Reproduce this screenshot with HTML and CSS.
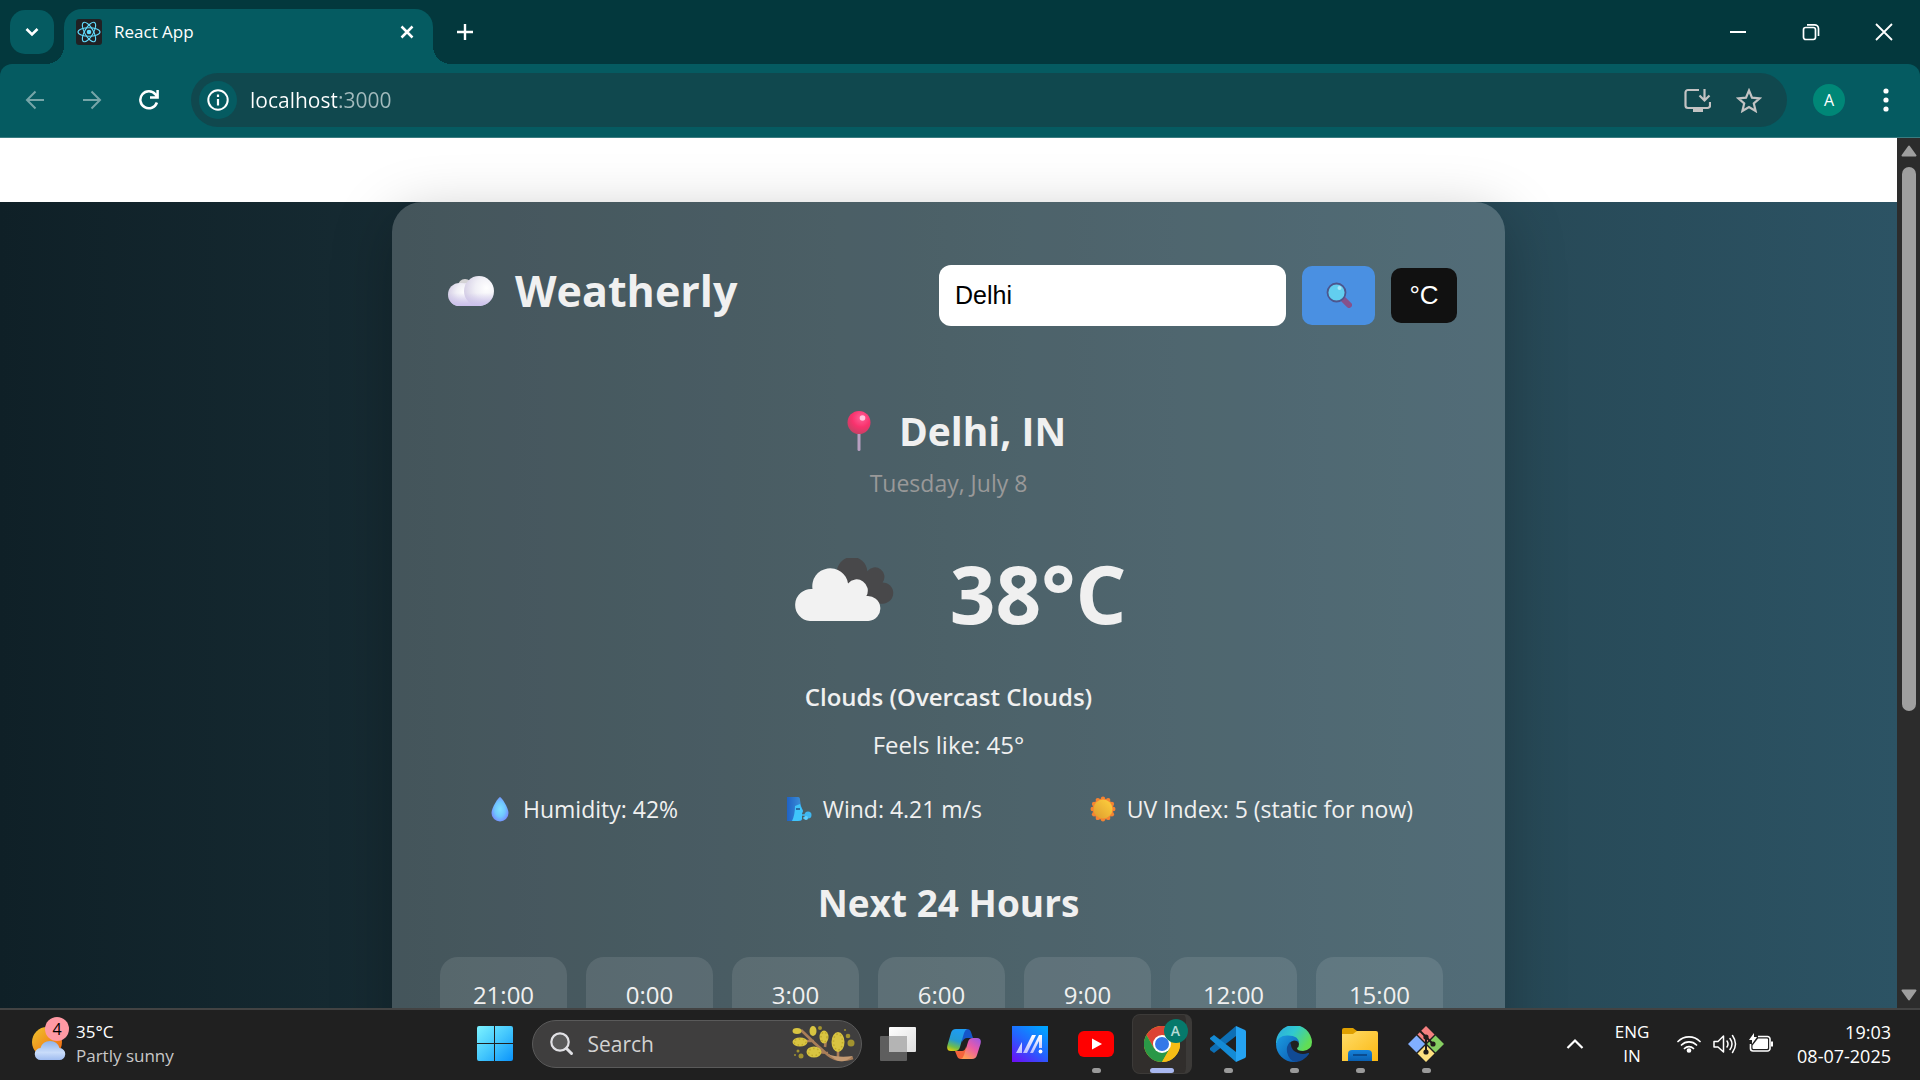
FILE: index.html
```html
<!DOCTYPE html>
<html lang="en">
<head>
<meta charset="utf-8">
<meta name="viewport" content="width=device-width, initial-scale=1">
<title>React App</title>
<link rel="stylesheet" href="styles.css">
</head>
<body>
<header class="browser">
  <div class="titlebar">
    <button class="tab-search" aria-label="Search tabs"><svg width="14" height="10" viewBox="0 0 14 10"><path d="M1.500 2 7 7.500 12.500 2" fill="none" stroke="#fff" stroke-width="2.600"/></svg></button>
    <div class="tab">
      <svg class="favicon" width="26" height="26" viewBox="0 0 26 26"><rect width="26" height="26" rx="3" fill="#202124"/><g fill="none" stroke="#61dafb" stroke-width="1.100"><ellipse cx="13" cy="13" rx="11" ry="4.300"/><ellipse cx="13" cy="13" rx="11" ry="4.300" transform="rotate(60 13 13)"/><ellipse cx="13" cy="13" rx="11" ry="4.300" transform="rotate(120 13 13)"/></g><circle cx="13" cy="13" r="2.300" fill="#61dafb"/></svg>
      <span class="tab-title">React App</span>
      <button class="tab-close" aria-label="Close tab"><svg width="14" height="14" viewBox="0 0 14 14"><path d="M1.500 1.500l11 11M12.500 1.500l-11 11" stroke="#fff" stroke-width="2.500"/></svg></button>
    </div>
    <button class="new-tab" aria-label="New tab"><svg width="18" height="18" viewBox="0 0 18 18"><path d="M9 1v16M1 9h16" stroke="#fff" stroke-width="2.400"/></svg></button>
    <div class="window-controls">
      <button aria-label="Minimize"><svg width="18" height="18" viewBox="0 0 18 18"><path d="M1 9h16" stroke="#fff" stroke-width="2"/></svg></button>
      <button aria-label="Restore"><svg width="18" height="18" viewBox="0 0 18 18" fill="none" stroke="#fff" stroke-width="1.700"><rect x="1.500" y="4.500" width="12" height="12" rx="2.200"/><path d="M5 1.800h7.500a4 4 0 0 1 4 4V13"/></svg></button>
      <button aria-label="Close"><svg width="18" height="18" viewBox="0 0 18 18"><path d="M1 1l16 16M17 1L1 17" stroke="#fff" stroke-width="1.800"/></svg></button>
    </div>
  </div>
  <div class="toolbar">
    <button class="nav dim" aria-label="Back"><svg width="20" height="20" viewBox="0 0 20 20" fill="none" stroke="#fff" stroke-width="2"><path d="M19 10H2M10.500 1.500 2 10l8.500 8.500"/></svg></button>
    <button class="nav dim" aria-label="Forward"><svg width="20" height="20" viewBox="0 0 20 20" fill="none" stroke="#fff" stroke-width="2"><path d="M1 10h17M9.500 1.500 18 10l-8.500 8.500"/></svg></button>
    <button class="nav" aria-label="Reload"><svg width="20" height="20" viewBox="0 0 20 20" fill="none" stroke="#fff" stroke-width="2.500"><path d="M17.900 12.500A8.500 8.500 0 1 1 16.500 4.500L18.500 7M18.600 0v7.500H11"/></svg></button>
    <div class="omnibox">
      <button class="site-info" aria-label="View site information"><svg width="22" height="22" viewBox="0 0 22 22"><circle cx="11" cy="11" r="9.700" fill="none" stroke="#fff" stroke-width="2"/><path d="M11 10v6.500M11 5.500v2.400" stroke="#fff" stroke-width="2.200"/></svg></button>
      <input class="url" type="text" value="localhost:3000" aria-label="Address">
      <button class="omni-action" aria-label="Install app"><svg width="27" height="24" viewBox="0 0 27 24" fill="none" stroke="#c3c3c3" stroke-width="2.200"><path d="M15 2H4a2.500 2.500 0 0 0-2.500 2.500v13A2.500 2.500 0 0 0 4 20h19.500a2.500 2.500 0 0 0 2.500-2.500V14M20.500 1v10.500M15.500 7.500l5 5 5-5"/><path d="M9 20h10v4H9z" fill="#c3c3c3" stroke="none"/></svg></button>
      <button class="omni-action" aria-label="Bookmark this tab"><svg width="26" height="25" viewBox="0 0 26 25"><path d="M13 2.500l3 7.200 7.700.7-5.900 5.100 1.800 7.500L13 19l-6.600 4 1.800-7.500-5.900-5.100 7.700-.7z" fill="none" stroke="#c3c3c3" stroke-width="2.200"/></svg></button>
    </div>
    <button class="profile" aria-label="Profile">A</button>
    <button class="menu" aria-label="Menu"><svg width="6" height="24" viewBox="0 0 6 24" fill="#fff"><circle cx="3" cy="3" r="2.600"/><circle cx="3" cy="12" r="2.600"/><circle cx="3" cy="21" r="2.600"/></svg></button>
  </div>
</header>

<div class="viewport">
  <main class="page">
    <div class="backdrop">
      <section class="card">
        <div class="card-header">
          <h1 class="brand">
            <svg width="48" height="34" viewBox="0 0 48 34"><defs><radialGradient id="c1" cx=".75" cy=".4" r=".75"><stop offset="0" stop-color="#fff"/><stop offset=".5" stop-color="#f0eff6"/><stop offset="1" stop-color="#d6d0e6"/></radialGradient><linearGradient id="c2" x1="0" y1="0" x2="0" y2="1"><stop offset="0" stop-color="#c9bfe9" stop-opacity="0"/><stop offset="1" stop-color="#cbc0ec"/></linearGradient></defs><circle cx="18" cy="12" r="7" fill="#d4d3d5"/><path d="M12 9h22v23H12z" fill="#e6e3ef"/><circle cx="12.500" cy="20.500" r="11.500" fill="url(#c1)"/><circle cx="32" cy="17" r="15" fill="url(#c1)"/><path d="M12 32A11.500 11.500 0 0 1 1 19h46a15 15 0 0 1-15 13z" fill="url(#c2)"/></svg>
            <span>Weatherly</span>
          </h1>
          <form class="search" onsubmit="return false">
            <input class="city" type="text" value="Delhi" aria-label="City">
            <button class="go" aria-label="Search"><svg width="26" height="26" viewBox="0 0 26 26"><path d="M17 17l6 6" stroke="#86518b" stroke-width="6" stroke-linecap="round"/><circle cx="10.500" cy="10.500" r="9" fill="#62ceef" stroke="#4d568e" stroke-width="1.800"/><circle cx="13.500" cy="6" r="2" fill="#a8e7fa"/></svg></button>
            <button class="unit" type="button">°C</button>
          </form>
        </div>
        <h2 class="place">
          <svg width="24" height="42" viewBox="0 0 24 42"><defs><radialGradient id="p1" cx=".6" cy=".3" r=".8"><stop offset="0" stop-color="#ff5f97"/><stop offset=".5" stop-color="#f8326d"/><stop offset="1" stop-color="#b94462"/></radialGradient></defs><rect x="10.500" y="22" width="3" height="19" rx="1.500" fill="#b79fc0"/><circle cx="12" cy="12.500" r="11.500" fill="url(#p1)"/><circle cx="15.500" cy="8" r="2.800" fill="#ffc4dd"/></svg>
          <span>Delhi, IN</span>
        </h2>
        <p class="date">Tuesday, July 8</p>
        <div class="now">
          <svg width="102" height="64" viewBox="0 0 100 63"><path d="M42 30V15a14.500 14.500 0 0 1 30-2 9 9 0 0 1 15 11 10.500 10.500 0 1 1 0 21H70z" fill="#48484a"/><path d="M15.500 62a15.500 15.500 0 0 1 2.500-31.500A17.700 17.700 0 0 1 53 25a11 11 0 0 1 18 12.500A12.300 12.300 0 1 1 73 62z" fill="#f2f2f2"/></svg>
          <span class="temp">38°C</span>
        </div>
        <p class="condition">Clouds (Overcast Clouds)</p>
        <p class="feels">Feels like: 45°</p>
        <ul class="stats">
          <li><svg width="24" height="26" viewBox="0 0 24 26"><defs><radialGradient id="d" cx=".5" cy=".5" r=".6"><stop offset="0" stop-color="#82e1ff"/><stop offset=".5" stop-color="#70c8ff"/><stop offset="1" stop-color="#777cff"/></radialGradient></defs><path d="M12 1c1.300 0 8.500 10.500 8.500 16a8.500 8.500 0 0 1-17 0C3.500 11.500 10.700 1 12 1z" fill="url(#d)"/></svg>Humidity: 42%</li>
          <li><svg width="26" height="26" viewBox="0 0 26 26"><defs><linearGradient id="w"><stop offset="0" stop-color="#1f62c4"/><stop offset="1" stop-color="#3f95dc"/></linearGradient></defs><path d="M1 1h11q2 0 2 3l1 6 2 5-1 3v6q-1 1-4 1H1z" fill="url(#w)"/><path d="M9 10l5-2 1 3 2 4-1 2v6q-1 2-4 2H6q3-6 3-15z" fill="#3fc5fb"/><path d="M10 13h4" stroke="#234f86" stroke-width="1.500"/><path d="M16 19h4M17 22h4" stroke="#43b9f1" stroke-width="1.500"/><circle cx="22" cy="19" r="3.500" fill="#3fb7f0"/><circle cx="20" cy="22" r="2" fill="#5fd0ff"/></svg>Wind: 4.21 m/s</li>
          <li><svg width="26" height="26" viewBox="0 0 26 26"><defs><linearGradient id="s" x1="1" y1="0" x2="0" y2="1"><stop offset="0" stop-color="#ffd23e"/><stop offset="1" stop-color="#dd9a2e"/></linearGradient></defs><g fill="#f58331"><circle cx="13" cy="13" r="10.500"/><circle cx="13" cy="2.700" r="2.200"/><circle cx="18.200" cy="4.100" r="2.200"/><circle cx="21.900" cy="7.900" r="2.200"/><circle cx="23.300" cy="13" r="2.200"/><circle cx="21.900" cy="18.200" r="2.200"/><circle cx="18.200" cy="21.900" r="2.200"/><circle cx="13" cy="23.300" r="2.200"/><circle cx="7.800" cy="21.900" r="2.200"/><circle cx="4.100" cy="18.200" r="2.200"/><circle cx="2.700" cy="13" r="2.200"/><circle cx="4.100" cy="7.900" r="2.200"/><circle cx="7.800" cy="4.100" r="2.200"/></g><circle cx="13" cy="13" r="9.500" fill="url(#s)"/></svg>UV Index: 5 (static for now)</li>
        </ul>
        <h3 class="section-title">Next 24 Hours</h3>
        <ol class="hours">
          <li>21:00</li><li>0:00</li><li>3:00</li><li>6:00</li><li>9:00</li><li>12:00</li><li>15:00</li>
        </ol>
      </section>
    </div>
  </main>
  <div class="scrollbar" aria-hidden="true">
    <svg width="16" height="12" viewBox="0 0 16 12"><path d="M8 1.500 14.500 10.500h-13z" fill="#9f9f9f" stroke="#9f9f9f" stroke-width="2" stroke-linejoin="round"/></svg>
    <div class="track"><div class="thumb"></div></div>
    <svg width="16" height="12" viewBox="0 0 16 12"><path d="M8 10.500 14.500 1.500h-13z" fill="#9f9f9f" stroke="#9f9f9f" stroke-width="2" stroke-linejoin="round"/></svg>
  </div>
</div>

<footer class="taskbar">
  <button class="widget">
    <svg width="38" height="44" viewBox="0 0 38 44"><defs><linearGradient id="su" x1="0" y1="0" x2="1" y2="1"><stop offset="0" stop-color="#efc52e"/><stop offset="1" stop-color="#f0600f"/></linearGradient><linearGradient id="cl" x1="0" y1="0" x2="0" y2="1"><stop offset="0" stop-color="#8fb4ec"/><stop offset=".6" stop-color="#c9dcfa"/><stop offset="1" stop-color="#9fbcf0"/></linearGradient></defs><circle cx="15" cy="26" r="15" fill="url(#su)"/><path d="M9 44a6 6 0 0 1-.500-12 10 10 0 0 1 19 0A6 6 0 0 1 27 44z" fill="url(#cl)"/></svg>
    <span class="badge">4</span>
    <span class="widget-text"><span>35°C</span><span class="muted">Partly sunny</span></span>
  </button>
  <div class="apps">
    <button class="app" aria-label="Start"><svg width="36" height="36" viewBox="0 0 36 36"><defs><linearGradient id="win" x1="0" y1="0" x2="1" y2="1"><stop offset="0" stop-color="#7df3ff"/><stop offset=".5" stop-color="#45c8fd"/><stop offset="1" stop-color="#0a93fb"/></linearGradient></defs><path d="M2 0h15v17H0V2Q0 0 2 0zM18 0h16q2 0 2 2v15H18zM0 18h17v17H2q-2 0-2-2zM18 18h18v15q0 2-2 2H18z" fill="url(#win)"/></svg></button>
    <div class="task-search">
      <svg width="24" height="24" viewBox="0 0 24 24" fill="none" stroke="#e1e1e5"><circle cx="10" cy="10" r="8.700" fill="#5a5a5a" stroke-width="2.200"/><path d="M16.500 16.500l5 5" stroke-width="3" stroke-linecap="round"/></svg>
      <input type="text" placeholder="Search" aria-label="Search">
      <svg width="64" height="38" viewBox="0 0 64 38"><path d="M9 5Q22 18 36 30 46 38 61 33M22 16h-8M33 22l1-8M36 28l-10-1M46 34V22" fill="none" stroke="#a87d58" stroke-width="2.600"/><path d="M36 29q9 4 25 2-9 8-17 4z" fill="#c39a72"/><g fill="#d8c441"><ellipse cx="5" cy="6" rx="4.500" ry="3"/><ellipse cx="21" cy="6" rx="3.500" ry="5"/><ellipse cx="8" cy="17" rx="7.500" ry="4.500"/><ellipse cx="32" cy="12" rx="4.500" ry="6.500"/><ellipse cx="46" cy="17" rx="6.500" ry="10"/><ellipse cx="22" cy="27" rx="7.500" ry="5.500"/></g><g fill="none" stroke="#c0aa2c" stroke-width="1.500" stroke-dasharray="1.500 2.500"><ellipse cx="8" cy="17" rx="6" ry="3"/><ellipse cx="46" cy="17" rx="4.500" ry="8"/><ellipse cx="22" cy="27" rx="5.500" ry="3.500"/><ellipse cx="32" cy="12" rx="3" ry="5"/></g><g fill="#a2932f"><circle cx="28" cy="3" r="2"/><circle cx="56" cy="11" r="2.300"/><circle cx="59" cy="18" r="3.500"/><circle cx="9" cy="31" r="2.500"/><circle cx="6" cy="26" r="1.500"/><circle cx="53" cy="5" r="1"/><circle cx="3" cy="30" r="1"/></g></svg>
    </div>
    <button class="app" aria-label="Task view"><svg width="36" height="36" viewBox="0 0 36 36"><defs><linearGradient id="tv" x1="0" y1="0" x2="1" y2="1"><stop offset="0" stop-color="#fff"/><stop offset="1" stop-color="#dedede"/></linearGradient></defs><rect x="9" y="1" width="27" height="25" rx="1" fill="url(#tv)"/><rect y="10" width="27" height="25" rx="1" fill="#5e5e5e"/><path d="M9 10h18v16H9z" fill="#b4b4b4"/></svg></button>
    <button class="app" aria-label="Copilot"><svg width="34" height="32" viewBox="0 0 34 32"><defs><linearGradient id="k1" x1=".3" y1="0" x2="0" y2="1"><stop offset="0" stop-color="#1f9cf0"/><stop offset=".45" stop-color="#259bd0"/><stop offset=".75" stop-color="#73bd47"/><stop offset="1" stop-color="#ffd000"/></linearGradient><linearGradient id="k2" x1="1" y1="0" x2=".3" y2="1"><stop offset="0" stop-color="#9757e8"/><stop offset=".5" stop-color="#e85ba8"/><stop offset="1" stop-color="#ff9c55"/></linearGradient></defs><path d="M13 1h7q3 0 4 3l2 6h-6q-3 0-5 4z" fill="#1556c9"/><path d="M21 31h-7q-3 0-4-3l-2-5h7q3 0 4-4z" fill="#f4643c"/><path d="M9 1h11q-2 1-3 4l-4 14q-1 4-5 4H4q-5 0-3.500-6L4 5q1-4 5-4z" fill="url(#k1)"/><path d="M25 31H14q2-1 3-4l4-13q1-4 5-4h4q5 0 3.500 6L30 27q-1 4-5 4z" fill="url(#k2)"/></svg></button>
    <button class="app" aria-label="MyASUS"><svg width="36" height="36" viewBox="0 0 36 36"><defs><linearGradient id="ma" x1=".8" y1="0" x2=".1" y2="1"><stop offset="0" stop-color="#00a2ff"/><stop offset=".5" stop-color="#2463ff"/><stop offset="1" stop-color="#6a11f5"/></linearGradient><linearGradient id="mb" x1="0" y1="0" x2="0" y2="1"><stop offset="0" stop-color="#fff"/><stop offset="1" stop-color="#b9bdff"/></linearGradient></defs><path d="M0 0h36v36H0z" fill="url(#ma)"/><path d="M4 27l6-11v11zM11 27l9-18h4l-9 18zM18 27l9-18h3v13h-3v-7l-6 12z" fill="url(#mb)"/><circle cx="28.500" cy="25.500" r="1.900" fill="#fff"/></svg></button>
    <button class="app running" aria-label="YouTube"><svg width="36" height="36" viewBox="0 0 36 36"><rect y="5" width="36" height="26" rx="6" fill="#f00"/><path d="M14 12.500v11l10-5.500z" fill="#fff"/></svg></button>
    <button class="app running active" aria-label="Google Chrome"><svg width="36" height="36" viewBox="0 0 36 36"><circle cx="18" cy="18" r="18" fill="#f6bd15"/><path d="M18 18 33.600 9A18 18 0 0 0 2.400 9l7.800 13.500z" fill="#dc4334"/><path d="M2.400 9A18 18 0 0 0 18 36l7.800-13.500L18 18l-7.800 4.500z" fill="#2a9847"/><path d="M18 36a18 18 0 0 0 15.600-27H18l7.800 13.500z" fill="#f6bd15"/><circle cx="18" cy="18" r="9" fill="#fff"/><circle cx="18" cy="18" r="7" fill="#3478e8"/></svg><span class="app-badge">A</span></button>
    <button class="app running" aria-label="Visual Studio Code"><svg width="36" height="36" viewBox="0 0 36 36"><path d="M26 0v10L4 27l-4-3v-2z" fill="#0d6fb5"/><path d="M4 9l22 17v10L0 13v-1z" fill="#148bd5"/><path d="M26 0l9 4q1 .5 1 2v24q0 1.500-1 2l-9 4z" fill="#25a3f2"/></svg></button>
    <button class="app running" aria-label="Microsoft Edge"><svg width="36" height="36" viewBox="0 0 36 36"><defs><linearGradient id="e1" x1="0" y1="0" x2="1" y2=".5"><stop offset="0" stop-color="#2ba5e0"/><stop offset=".5" stop-color="#30c9d0"/><stop offset="1" stop-color="#62dd54"/></linearGradient><linearGradient id="e2" x1="0" y1="0" x2="1" y2="1"><stop offset="0" stop-color="#1b9de2"/><stop offset="1" stop-color="#0b57b0"/></linearGradient></defs><path d="M0 18A18 18 0 0 1 36 16q0 8-9 9-6 0-6-3 2-1 2-4 0-6-9-6Q3 12 0 18z" fill="url(#e1)"/><path d="M0 18Q2 9 12 9.500q11 0 11 8-1-3-5-3-6 1-6 9 1 12 10 12-2 .5-4 .5A18 18 0 0 1 0 18z" fill="url(#e2)"/><path d="M14 16q-4 4-3 10 2 9 9 10 8-1 13-8 .5-1.500-1-1-5 2-10 0-7-3-7-8z" fill="#114a94"/></svg></button>
    <button class="app running" aria-label="File Explorer"><svg width="36" height="36" viewBox="0 0 36 36"><defs><linearGradient id="f" x1="0" y1="0" x2="1" y2="1"><stop offset="0" stop-color="#ffdc68"/><stop offset="1" stop-color="#fbb812"/></linearGradient><linearGradient id="fb" x1="0" y1="0" x2="0" y2="1"><stop offset="0" stop-color="#1583dc"/><stop offset="1" stop-color="#0a5fb0"/></linearGradient></defs><path d="M0 4q0-2 2-2h9l4 3v6H0z" fill="#dfa000"/><path d="M0 8h11l4-3h19q2 0 2 2v28H0z" fill="url(#f)"/><path d="M6 35v-7q0-4 4-4h16q4 0 4 4v7z" fill="url(#fb)"/><path d="M11 29h14" stroke="#083f7c" stroke-width="1.500"/></svg></button>
    <button class="app running" aria-label="Git"><svg width="36" height="36" viewBox="0 0 36 36"><path d="M18 0l8.500 8.500L18 17 9.500 8.500z" fill="#f58080"/><path d="M27.500 9.500 36 18l-8.500 8.500L19 18z" fill="#86ce62"/><path d="M8.500 9.500 17 18l-8.500 8.500L0 18z" fill="#81afff"/><path d="M18 19l8.500 8.500L18 36l-8.500-8.500z" fill="#ffe180"/><path d="M12 5l6 6v15M18 11l7 7" fill="none" stroke="#201c1a" stroke-width="2"/><circle cx="18" cy="11" r="2.600" fill="#201c1a"/><circle cx="25" cy="18" r="2.600" fill="#201c1a"/><circle cx="18" cy="26" r="2.600" fill="#201c1a"/></svg></button>
  </div>
  <div class="tray">
    <button class="tray-more" aria-label="Show hidden icons"><svg width="18" height="12" viewBox="0 0 18 12"><path d="M1.500 10 9 2.500l7.500 7.500" fill="none" stroke="#fff" stroke-width="2.200"/></svg></button>
    <button class="lang"><span>ENG</span><span>IN</span></button>
    <button class="status" aria-label="Network, volume and battery">
      <svg width="24" height="24" viewBox="0 0 24 24" fill="none" stroke="#fff" stroke-width="1.700" stroke-linecap="round"><path d="M1 9.500a15.500 15.500 0 0 1 22 0M4.500 13a10.500 10.500 0 0 1 15 0M7.500 16.500a6.200 6.200 0 0 1 9 0"/><circle cx="12" cy="18.500" r="1.500" fill="#fff"/></svg>
      <svg width="24" height="24" viewBox="0 0 24 24" fill="none" stroke="#fff" stroke-width="1.500" stroke-linecap="round" stroke-linejoin="round"><path d="M1 9.500v5.500h4l5.500 5V4L5 9.500zM14 9q2 3 0 6M17 6.500q4 5.500 0 11M19.500 3.500q6 8.500 0 17"/></svg>
      <svg width="24" height="24" viewBox="0 0 24 24"><path d="M9 4.500h9.500a2.500 2.500 0 0 1 2.500 2.500v9.500a2.500 2.500 0 0 1-2.500 2.500H4a2.500 2.500 0 0 1-2.500-2.500V12" fill="none" stroke="#fff" stroke-width="1.600"/><path d="M9 6.500h9q1 0 1 1v8.500q0 1-1 1H4.500q-1 0-1-1v-2.500zM22 9.500h2v5h-2zM5 1v4h3l-5 7V8H0z" fill="#fff"/></svg>
    </button>
    <button class="clock"><span>19:03</span><span>08-07-2025</span></button>
  </div>
</footer>
</body>
</html>
```
FILE: styles.css
```css
*, *::before, *::after { box-sizing: border-box; }
html, body { height: 100%; }
body {
  margin: 0;
  display: flex;
  flex-direction: column;
  overflow: hidden;
  background: #fff;
  color: #f0f0f0;
  font-family: "Open Sans", "Noto Sans", sans-serif;
  font-size: 24px;
}
button {
  border: 0;
  padding: 0;
  background: none;
  color: inherit;
  font: inherit;
  display: flex;
  align-items: center;
  justify-content: center;
  flex: none;
}
input { border: 0; outline: 0; padding: 0; background: none; color: inherit; font: inherit; min-width: 0; }
svg { display: block; flex: none; }
h1, h2, h3, p, ul, ol { margin: 0; padding: 0; }
ul, ol { list-style: none; }

/* Browser frame */
.browser { flex: none; background: #03383d; }
.titlebar { display: flex; height: 64px; padding: 9px 0 0 10px; align-items: flex-start; }
.tab-search { width: 44px; height: 44px; margin-top: 1px; border-radius: 15px; background: #055b61; }
.tab {
  position: relative;
  display: flex;
  align-items: center;
  width: 369px;
  height: 55px;
  margin-left: 10px;
  padding: 0 19px 9px 12px;
  border-radius: 18px 18px 0 0;
  background: #055b61;
}
.tab::before, .tab::after {
  content: "";
  position: absolute;
  bottom: 0;
  width: 18px;
  height: 18px;
}
.tab::before { left: -18px; background: radial-gradient(circle at 0 0, transparent 18px, #055b61 18px); }
.tab::after { right: -18px; background: radial-gradient(circle at 100% 0, transparent 18px, #055b61 18px); }
.tab-title { flex: 1; margin-left: 12px; font-size: 17px; line-height: 24px; color: #fff; }
.new-tab { width: 44px; height: 44px; margin-left: 10px; margin-top: 1px; }
.window-controls { display: flex; margin-left: auto; }
.window-controls button { width: 73px; height: 46px; }
.toolbar {
  display: flex;
  align-items: center;
  height: 74px;
  padding: 0 18px 1px 6px;
  border-radius: 12px 12px 0 0;
  border-bottom: 1px solid #3a7c81;
  background: #055b61;
}
.nav { width: 57px; height: 54px; }
.dim { opacity: .45; }
.omnibox {
  flex: 1;
  display: flex;
  align-items: center;
  height: 54px;
  margin-left: 14px;
  padding: 0 13px 0 8px;
  border-radius: 27px;
  background: #10484e;
}
.site-info { width: 38px; height: 38px; border-radius: 50%; background: #055b61; }
.url {
  flex: 1;
  margin-left: 13px;
  font-size: 21px;
  background: linear-gradient(90deg, #fff 87px, #a3bbbd 87px);
  -webkit-background-clip: text;
  background-clip: text;
  -webkit-text-fill-color: transparent;
}
.omni-action { width: 51px; height: 44px; }
.profile { width: 32px; height: 32px; margin-left: 26px; border-radius: 50%; background: #008777; color: #fff; font-size: 16px; }
.menu { width: 32px; height: 44px; margin-left: 25px; }

/* Page area */
.viewport { flex: 1; min-height: 0; display: flex; }
.page { flex: 1; min-width: 0; padding-top: 64px; overflow: hidden; }
.backdrop {
  display: flex;
  justify-content: center;
  min-height: 100vh;
  background: linear-gradient(to right, #0f2027, #203a43, #2c5364);
}
.card {
  width: 1113px;
  max-width: 90%;
  padding: 48px;
  border-radius: 30px;
  background: rgba(255, 255, 255, .2);
  box-shadow: 0 15px 60px rgba(0, 0, 0, .25);
  text-align: center;
}
.card-header { display: flex; align-items: center; justify-content: space-between; height: 90px; }
.brand { display: flex; align-items: center; gap: 20px; padding-left: 7px; margin-top: -8px; font-size: 43px; line-height: 64px; font-weight: 700; }
.search { display: flex; align-items: center; gap: 16px; }
.city, .go, .unit { font-family: "Liberation Sans", Arial, sans-serif; }
.city { width: 347px; height: 61px; padding: 0 16px; border-radius: 12px; background: #fff; color: #000; font-size: 25px; }
.go { width: 73px; height: 59px; border-radius: 10px; background: #4a90e2; }
.unit { width: 66px; height: 55px; border-radius: 10px; background: #111; color: #fff; font-size: 26px; }
.place { display: flex; align-items: center; justify-content: center; gap: 28px; margin-top: 59px; padding-left: 16px; font-size: 39px; line-height: 64px; }
.date { margin-top: 2px; font-size: 23px; line-height: 36px; color: #999; }
.now { display: flex; align-items: center; justify-content: center; gap: 54px; margin-top: 42px; padding-left: 23px; }
.now svg { margin-bottom: 6px; }
.temp { font-size: 80px; line-height: 100px; font-weight: 700; }
.condition { margin-top: 36px; line-height: 36px; font-weight: 600; }
.feels { margin-top: 12px; line-height: 36px; }
.stats { display: flex; justify-content: space-between; margin-top: 28px; padding: 0 44px 0 48px; font-size: 23px; line-height: 36px; }
.stats li { display: flex; align-items: center; gap: 11px; }
.section-title { margin-top: 48px; font-size: 37px; line-height: 56px; }
.hours { display: flex; gap: 19px; margin-top: 26px; }
.hours li { width: 127px; height: 190px; padding-top: 27px; border-radius: 18px; background: rgba(255, 255, 255, .1); line-height: 22px; }

.scrollbar { display: flex; flex-direction: column; align-items: center; justify-content: space-between; width: 23px; padding: 7px 0; background: #2c2c2c; }
.track { flex: 1; width: 14px; padding: 10px 0; }
.thumb { height: 67%; border-radius: 7px; background: #9f9f9f; }

/* Taskbar */
.taskbar {
  flex: none;
  display: grid;
  grid-template-columns: 1fr auto 1fr;
  align-items: center;
  height: 72px;
  padding-bottom: 2px;
  border-top: 2px solid #434343;
  background: #202020;
  color: #fff;
  font-size: 17px;
  line-height: 24px;
}
.widget { position: relative; justify-self: start; gap: 6px; padding-left: 32px; }
.widget svg { margin-top: -12px; }
.badge { position: absolute; left: 45px; top: -3px; width: 24px; height: 24px; border-radius: 50%; background: #ff99a4; color: #000; font-size: 16px; }
.widget-text { display: flex; flex-direction: column; text-align: left; }
.muted { color: #c8c8c8; }
.apps { display: flex; align-items: center; }
.app { position: relative; width: 66px; height: 68px; }
.app svg { position: relative; }
.running::after { content: ""; position: absolute; left: 50%; bottom: 5px; width: 9px; height: 5px; margin-left: -4px; border-radius: 3px; background: #9a9a9a; }
.active::after { width: 24px; margin-left: -12px; background: #a9b8f0; }
.active::before { content: ""; position: absolute; left: 3px; top: 4px; width: 60px; height: 60px; border-radius: 8px; border: 1px solid #3c3a38; border-right-width: 6px; background: #312e2c; }
.app-badge { position: absolute; left: 35px; top: 9px; width: 24px; height: 24px; border-radius: 50%; background: #06796b; color: #b5dcd7; font-size: 14px; font-weight: 600; }
.task-search {
  display: flex;
  align-items: center;
  width: 330px;
  height: 48px;
  margin: 0 3px 0 4px;
  padding: 0 5px 0 17px;
  border: 1px solid #5a5a5a;
  border-radius: 24px;
  background: #3f3e3e;
}
.task-search input { flex: 1; margin-left: 14px; font-size: 21px; color: #fff; }
.task-search input::placeholder { color: #d2d2d2; opacity: 1; }
.tray { display: flex; align-items: center; justify-self: end; padding-right: 29px; }
.lang, .clock { flex-direction: column; }
.lang { width: 40px; margin-left: 28px; font-size: 17px; }
.status { gap: 12px; margin-left: 25px; }
.clock { align-items: flex-end; width: 100px; margin-left: 18px; font-size: 18px; }
```
